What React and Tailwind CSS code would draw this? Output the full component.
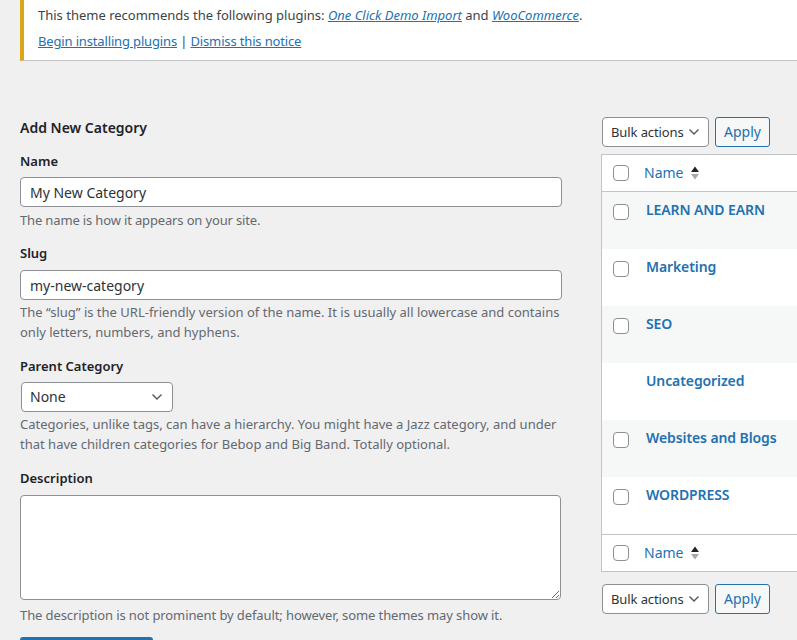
import React from "react";

const rows = [
  { name: "LEARN AND EARN", check: true },
  { name: "Marketing", check: true },
  { name: "SEO", check: true },
  { name: "Uncategorized", check: false },
  { name: "Websites and Blogs", check: true },
  { name: "WORDPRESS", check: true },
];

function Checkbox() {
  return <div className="w-4 h-4 border border-[#8c8f94] rounded-[4px] bg-white shrink-0"></div>;
}

function Chevron() {
  return (
    <svg width="12" height="8" viewBox="0 0 12 8" className="shrink-0">
      <path d="M1.5 1.5 L6 6 L10.5 1.5" fill="none" stroke="#50575e" strokeWidth="1.4" />
    </svg>
  );
}

function SortIcon() {
  return (
    <svg width="10" height="16" viewBox="0 0 10 16" className="ml-[7px]">
      <polygon points="1,7 5,1.5 9,7" fill="#1d2327" />
      <polygon points="1,9 9,9 5,14.5" fill="#a7aaad" />
    </svg>
  );
}

function BulkBar() {
  return (
    <div className="flex gap-[6px]">
      <div className="w-[107px] h-[30px] bg-white border border-[#8c8f94] rounded-[4px] flex items-center justify-between pl-[8px] pr-[8px] text-[13px] tracking-[-0.1px] text-[#2c3338] whitespace-nowrap">
        <span>Bulk actions</span>
        <Chevron />
      </div>
      <div className="w-[55px] h-[30px] bg-[#f6f7f7] border border-[#2271b1] rounded-[3px] flex items-center justify-center text-[14px] text-[#2271b1]">
        Apply
      </div>
    </div>
  );
}

function HeaderRow({ border }) {
  return (
    <div className={"h-[37px] flex items-center pl-[11px] bg-white " + border}>
      <Checkbox />
      <span className="ml-[15px] text-[14px] text-[#2271b1]">Name</span>
      <SortIcon />
    </div>
  );
}

export default function App() {
  return (
    <div className="w-[797px] h-[640px] overflow-hidden bg-[#f0f0f1] font-['Noto_Sans',sans-serif] text-[13px] leading-[20px] text-[#3c434a]">
      {/* plugin notice */}
      <div className="ml-[20px] w-[900px] bg-white border-l-4 border-l-[#dba617] border-b border-b-[#c3c4c7] pl-[14px] pt-[5px] pb-[9px]">
        <p className="text-[#3c434a]">
          This theme recommends the following plugins:{" "}
          <a className="italic underline text-[#2271b1]">One Click Demo Import</a> and{" "}
          <a className="italic underline text-[#2271b1]">WooCommerce</a>.
        </p>
        <p className="mt-[6px] tracking-[-0.15px]">
          <a className="underline text-[#2271b1]">Begin installing plugins</a> |{" "}
          <a className="underline text-[#2271b1]">Dismiss this notice</a>
        </p>
      </div>

      <div className="flex pl-[20px] mt-[56px] gap-[40px]">
        {/* left: add form */}
        <div className="w-[542px] shrink-0">
          <h2 className="text-[14px] font-semibold text-[#1d2327] mt-[1px]">Add New Category</h2>

          <label className="block mt-[13px] font-semibold text-[#1d2327]">Name</label>
          <input
            readOnly
            value="My New Category"
            className="block mt-[6px] w-full h-[30px] bg-white border border-[#8c8f94] rounded-[4px] px-[9px] text-[14px] text-[#2c3338] outline-none"
          />
          <p className="mt-[3px] text-[#646970] tracking-[-0.15px]">The name is how it appears on your site.</p>

          <label className="block mt-[13px] font-semibold text-[#1d2327]">Slug</label>
          <input
            readOnly
            value="my-new-category"
            className="block mt-[7px] w-full h-[30px] bg-white border border-[#8c8f94] rounded-[4px] px-[9px] text-[14px] text-[#2c3338] outline-none"
          />
          <p className="mt-[2px] text-[#646970]">
            The “slug” is the URL-friendly version of the name. It is usually all lowercase and contains only letters, numbers, and hyphens.
          </p>

          <label className="block mt-[14px] font-semibold text-[#1d2327]">Parent Category</label>
          <div className="mt-[6px] ml-[1px] w-[152px] h-[30px] bg-white border border-[#8c8f94] rounded-[4px] flex items-center justify-between pl-[8px] pr-[9px] text-[14px] text-[#2c3338]">
            <span>None</span>
            <Chevron />
          </div>
          <p className="mt-[2px] text-[#646970]">
            Categories, unlike tags, can have a hierarchy. You might have a Jazz category, and under that have children categories for Bebop and Big Band. Totally optional.
          </p>

          <label className="block mt-[14px] font-semibold text-[#1d2327]">Description</label>
          <textarea
            readOnly
            className="block mt-[7px] w-[541px] h-[105px] bg-white border border-[#8c8f94] rounded-[4px] outline-none"
          ></textarea>
          <p className="mt-[5px] text-[#646970] tracking-[-0.1px]">The description is not prominent by default; however, some themes may show it.</p>

          {/* submit button, only its top edge is in view */}
          <button aria-label="Add New Category" className="block mt-[12px] h-[32px] w-[133px] bg-[#2271b1] rounded-[3px]"></button>
        </div>

        {/* right: list table */}
        <div className="w-[400px] shrink-0">
          <BulkBar />
          <div className="mt-[7px] -ml-[1px] border border-[#c3c4c7] bg-white">
            <HeaderRow border="border-b border-b-[#c3c4c7]" />
            {rows.map((r, i) => (
              <div
                key={r.name}
                className={"h-[57px] flex items-start pl-[11px] " + (i % 2 === 0 ? "bg-[#f6f7f7]" : "bg-white")}
              >
                <div className="w-4 mt-[12px]">{r.check && <Checkbox />}</div>
                <span className="ml-[17px] mt-[8px] text-[14px] font-semibold text-[#2271b1] tracking-[-0.1px]">{r.name}</span>
              </div>
            ))}
            <HeaderRow border="border-t border-t-[#c3c4c7]" />
          </div>
          <div className="mt-[12px]">
            <BulkBar />
          </div>
        </div>
      </div>
    </div>
  );
}
